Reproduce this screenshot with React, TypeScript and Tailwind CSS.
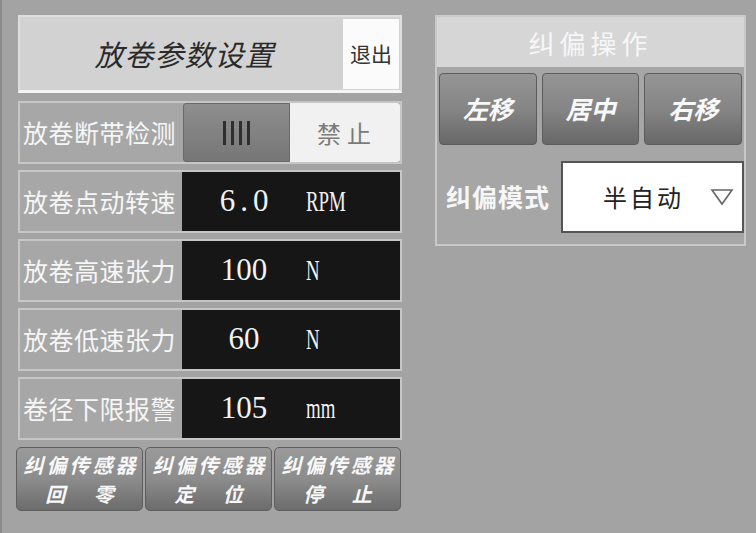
import React from 'react';

const cjk = { fontFamily: '"Noto Sans CJK SC", "Noto Sans", sans-serif' };
const serif = { fontFamily: '"Liberation Serif", "DejaVu Serif", serif' };

type Row = { label: string; value: string; unit: string; valueTrack: string };

const rows: Row[] = [
  { label: '放卷点动转速', value: '6.0', unit: 'RPM', valueTrack: 'tracking-[5px] pl-[5px]' },
  { label: '放卷高速张力', value: '100', unit: 'N', valueTrack: 'tracking-[0px]' },
  { label: '放卷低速张力', value: '60', unit: 'N', valueTrack: 'tracking-[0px]' },
  { label: '卷径下限报警', value: '105', unit: 'mm', valueTrack: 'tracking-[0px]' },
];

const sensorButtons = ['回 零', '定 位', '停 止'];
const moveButtons = ['左移', '居中', '右移'];

const App: React.FC = () => {
  return (
    <div className="w-[756px] h-[533px] bg-[#a3a3a3] flex overflow-hidden border-l-2 border-[#8c8c8c]" style={cjk}>
      {/* Left column: unwind parameters */}
      <div className="w-[388px] ml-[14px] pt-[15px] flex flex-col">
        {/* Title */}
        <div className="ml-[2px] w-[384px] h-[78px] bg-[#d2d2d2] border-2 border-[#dedede] border-b-[3px] border-b-[#f4f4f4] flex items-center">
          <div className="flex-1 text-center italic text-[29px] text-[#2a2a2a] tracking-[1px] pl-[6px]">放卷参数设置</div>
          <div className="w-[56px] h-[70px] mr-[1px] bg-[#fbfbfb] flex items-center justify-center text-[21px] text-[#333]">退出</div>
        </div>

        {/* Break detection toggle */}
        <div className="ml-[2px] mt-[8px] w-[384px] h-[63px] border-2 border-[#c6c6c6] bg-[#a7a7a7] flex">
          <div className="w-[163px] flex items-center pl-[3px] text-[25px] text-[#f6f6f6] tracking-[0.5px]">放卷断带检测</div>
          <div className="w-[107px] rounded-l-[3px] bg-gradient-to-b from-[#8e8e8e] to-[#767676] border border-[#6a6a6a] flex items-center justify-center gap-[5px]">
            <span className="w-[3px] h-[24px] bg-[#2e2e2e]" />
            <span className="w-[3px] h-[24px] bg-[#2e2e2e]" />
            <span className="w-[3px] h-[24px] bg-[#2e2e2e]" />
            <span className="w-[3px] h-[24px] bg-[#2e2e2e]" />
          </div>
          <div className="flex-1 bg-[#f1f1f1] rounded-r-[3px] flex items-center justify-center text-[24px] text-[#7a7a7a] tracking-[6px] pl-[4px]">禁止</div>
        </div>

        {/* Numeric rows */}
        {rows.map((r) => (
          <div key={r.label} className="ml-[2px] mt-[6px] w-[384px] h-[63px] border-2 border-[#c6c6c6] bg-[#a7a7a7] flex">
            <div className="w-[162px] flex items-center pl-[3px] text-[25px] text-[#f6f6f6] tracking-[0.5px]">{r.label}</div>
            <div className="flex-1 bg-[#161616] flex items-center" style={serif}>
              <div className={`w-[124px] text-center text-[31px] text-[#f2f2f2] ${r.valueTrack}`}>{r.value}</div>
              <div className="inline-block text-[29px] text-[#f2f2f2] scale-x-[0.65] origin-left">{r.unit}</div>
            </div>
          </div>
        ))}

        {/* Sensor buttons */}
        <div className="mt-[7px] flex gap-[2px]">
          {sensorButtons.map((b) => (
            <div
              key={b}
              className="w-[127px] h-[64px] rounded-[5px] border border-[#5e5e5e] bg-gradient-to-b from-[#9a9a9a] via-[#8c8c8c] to-[#6c6c6c] flex flex-col items-center justify-center leading-[29px] text-[#f8f8f8] italic font-bold"
            >
              <span className="text-[20px] tracking-[3px] pl-[3px]">纠偏传感器</span>
              <span className="text-[20px] tracking-[12px] pl-[12px]">{b}</span>
            </div>
          ))}
        </div>
      </div>

      {/* Right column: deviation correction */}
      <div className="ml-[31px] mt-[15px] w-[311px] h-[231px] border-2 border-[#c9c9c9] bg-[#a6a6a6] flex flex-col">
        <div className="h-[50px] bg-[#d6d6d6] flex items-center justify-center text-[26px] text-[#f7f7f7] tracking-[5px]">纠偏操作</div>
        <div className="mt-[6px] px-[2px] flex gap-[5px]">
          {moveButtons.map((b) => (
            <div
              key={b}
              className="flex-1 h-[72px] rounded-[4px] border border-[#5c5c5c] bg-gradient-to-b from-[#959595] via-[#858585] to-[#686868] flex items-center justify-center text-[25px] text-[#f8f8f8] italic font-bold"
            >
              {b}
            </div>
          ))}
        </div>
        <div className="mt-[16px] flex items-center">
          <div className="w-[124px] pl-[9px] text-[25px] text-[#f6f6f6] font-bold tracking-[1px]">纠偏模式</div>
          <div className="w-[183px] h-[72px] bg-white border-2 border-[#555] flex items-center">
            <div className="flex-1 text-center text-[24px] text-[#222] tracking-[3px] pl-[14px]">半自动</div>
            <svg width="24" height="18" viewBox="0 0 24 18" className="mr-[8px]">
              <path d="M2 2 L22 2 L12 16 Z" fill="none" stroke="#666" strokeWidth="1.6" />
            </svg>
          </div>
        </div>
      </div>
    </div>
  );
};

export default App;
